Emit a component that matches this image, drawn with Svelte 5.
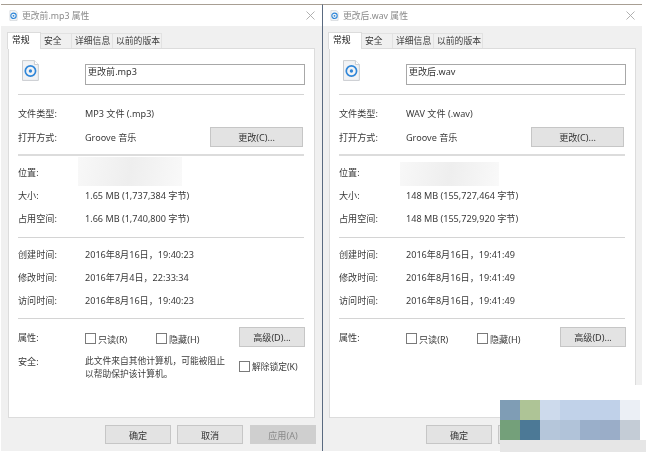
<script>
  const windows = [
    {
      name: '更改前.mp3',
      type: 'MP3 文件 (.mp3)',
      size: '1.65 MB (1,737,384 字节)',
      disk: '1.66 MB (1,740,800 字节)',
      created: '2016年8月16日，19:40:23',
      modified: '2016年7月4日，22:33:34',
      accessed: '2016年8月16日，19:40:23',
      blocked: true
    },
    {
      name: '更改后.wav',
      type: 'WAV 文件 (.wav)',
      size: '148 MB (155,727,464 字节)',
      disk: '148 MB (155,729,920 字节)',
      created: '2016年8月16日，19:41:49',
      modified: '2016年8月16日，19:41:49',
      accessed: '2016年8月16日，19:41:49',
      blocked: false
    }
  ];

  const tabs = ['常规', '安全', '详细信息', '以前的版本'];

  // watermark mosaic, bottom right
  const mosaic = [
    '#7f9db5', '#aec496', '#cddaec', '#c1d2e9', '#c0d1e9', '#c0d1e9', '#ebeff5',
    '#74a07a', '#4c7996', '#b5c6da', '#b1c3d9', '#9aafca', '#9aadc8', '#c4ccd6'
  ];
</script>

<div class="page">
  {#each windows as win, w}
    <section class="window" class:second={w === 1}>
      <header class="title">
        <svg class="title-icon" viewBox="0 0 10 12" width="9" height="11">
          <path d="M1 .5h6l2 2v9H1z" fill="#f4f6f8" stroke="#c4c8cc" stroke-width=".6" />
          <circle cx="5" cy="6.4" r="3" fill="none" stroke="#2f86d8" stroke-width="1.2" />
          <circle cx="5" cy="6.4" r="1" fill="#2f86d8" />
        </svg>
        <span>{win.name} 属性</span>
        <svg class="close" viewBox="0 0 9 9" width="9" height="9">
          <path d="M.5.5l8 8M8.5.5l-8 8" stroke="#a8a8a8" stroke-width=".9" fill="none" />
        </svg>
      </header>

      <nav class="tabs">
        {#each tabs as tab, i}
          <span class="tab tab{i}" class:active={i === 0}>{tab}</span>
        {/each}
      </nav>

      <div class="panel">
        <div class="head">
          <svg viewBox="0 0 17 21" width="17" height="21">
            <path d="M.5.5h12l4 4v16H.5z" fill="#f2f3f5" stroke="#c9ccd0" />
            <path d="M12.5.5v4h4" fill="#fff" stroke="#c9ccd0" />
            <circle cx="8.5" cy="11" r="5.2" fill="none" stroke="#2f86d8" stroke-width="1.7" />
            <circle cx="8.5" cy="11" r="1.7" fill="#2f86d8" />
          </svg>
          <div class="name-input">{win.name}</div>
        </div>

        <hr />

        <div class="row first"><span>文件类型:</span><span>{win.type}</span></div>
        <div class="row open">
          <span>打开方式:</span><span>Groove 音乐</span>
          <button class="change">更改(C)...</button>
        </div>

        <hr class="thick" />

        <div class="group">
          <div class="row"><span>位置:</span><span></span></div>
          <div class="row"><span>大小:</span><span>{win.size}</span></div>
          <div class="row"><span>占用空间:</span><span>{win.disk}</span></div>
        </div>

        <hr />

        <div class="group last">
          <div class="row"><span>创建时间:</span><span>{win.created}</span></div>
          <div class="row"><span>修改时间:</span><span>{win.modified}</span></div>
          <div class="row"><span>访问时间:</span><span>{win.accessed}</span></div>
        </div>

        <hr />

        <div class="row attrs">
          <span>属性:</span>
          <label class="check"><i></i>只读(R)</label>
          <label class="check hidden"><i></i>隐藏(H)</label>
          <button class="advanced">高级(D)...</button>
        </div>

        {#if win.blocked}
          <div class="row security">
            <span>安全:</span>
            <p>此文件来自其他计算机，可能被阻止<br />以帮助保护该计算机。</p>
            <label class="check unlock"><i></i>解除锁定(K)</label>
          </div>
        {/if}

        <div class="smudge" class:alt={w === 1}></div>
      </div>

      <footer class="actions">
        <button>确定</button>
        <button>取消</button>
        <button disabled>应用(A)</button>
      </footer>
    </section>
  {/each}

  <div class="fade"></div>
  <div class="mosaic">
    {#each mosaic as colour}
      <b style="background: {colour}"></b>
    {/each}
  </div>
</div>

<style>
  :global(body) {
    margin: 0;
    background: #fff;
  }

  .page {
    position: relative;
    width: 646px;
    height: 452px;
    overflow: hidden;
    display: flex;
    padding-top: 4px;
    padding-left: 1px;
    box-sizing: border-box;
    background: #fff;
    font-family: "Noto Sans", "Noto Sans CJK SC", sans-serif;
    font-size: 9.1px;
    color: #3a3a3a;
    filter: blur(0.35px);
  }

  .window {
    width: 321px;
    height: 447px;
    flex: none;
    display: flex;
    flex-direction: column;
    background: #f0f0f0;
    border-top: 1px solid #a89f94;
    box-sizing: border-box;
  }

  .window.second {
    width: 320px;
    border-left: 1px solid #5a6a80;
  }

  .title {
    height: 21px;
    flex: none;
    display: flex;
    align-items: center;
    gap: 4px;
    padding: 0 7px 0 8px;
    background: #fff;
    color: #8a8a8a;
    font-size: 8.8px;
  }

  .second .title {
    padding-left: 7px;
  }

  .close {
    margin-left: auto;
  }

  .tabs {
    display: flex;
    align-items: flex-end;
    height: 22px;
    flex: none;
    padding-left: 6px;
  }

  .second .tabs {
    padding-left: 5px;
  }

  .tab {
    height: 15px;
    line-height: 14px;
    padding-left: 3px;
    box-sizing: border-box;
    white-space: nowrap;
    font-size: 8.8px;
    background: #f0f0f0;
    border: 1px solid #e2e2e2;
    border-bottom: none;
    border-left: none;
  }

  .tab0 { width: 34px; }
  .tab1 { width: 31px; }
  .tab2 { width: 41px; }
  .tab3 { width: 49px; }

  .tab.active {
    height: 17px;
    line-height: 14px;
    padding-left: 4px;
    background: #fff;
    color: #222;
    border: 1px solid #dcdcdc;
    border-bottom: none;
    margin-bottom: -1px;
    position: relative;
    z-index: 1;
  }

  .panel {
    position: relative;
    width: 307px;
    height: 370px;
    flex: none;
    margin-left: 7px;
    padding: 0 9px;
    box-sizing: border-box;
    background: #fff;
    border: 1px solid #dcdcdc;
  }

  .second .panel {
    margin-left: 6px;
  }

  .head {
    display: flex;
    align-items: flex-start;
    height: 45px;
    padding-top: 11px;
    box-sizing: border-box;
  }

  .head svg {
    margin-left: 4px;
  }

  .name-input {
    width: 222px;
    height: 21px;
    margin-left: 46px;
    margin-top: 4px;
    padding: 0 2px;
    box-sizing: border-box;
    border: 1px solid #a8a8a8;
    line-height: 14px;
    color: #333;
  }

  hr {
    margin: 0;
    border: none;
    border-top: 1px solid #d4d4d4;
    width: 286px;
  }

  hr.thick {
    border-top-width: 2px;
    border-top-color: #dcdcdc;
  }

  .row {
    display: grid;
    grid-template-columns: 67px 1fr;
    align-items: center;
    height: 23px;
  }

  .row.first {
    margin-top: 5px;
    height: 25px;
  }

  .row.open {
    grid-template-columns: 67px 125px 93px;
    height: 24px;
    margin-bottom: 5px;
  }

  .group {
    padding: 4px 0 8px;
  }

  .group.last {
    padding-bottom: 7px;
  }

  button {
    height: 20px;
    padding: 0;
    font: inherit;
    color: #333;
    background: #e3e3e3;
    border: 1px solid #c6c6c6;
    box-sizing: border-box;
  }

  button:disabled {
    background: #cfcfcf;
    border-color: #cfcfcf;
    color: #8a8a8a;
  }

  .row.attrs {
    grid-template-columns: 67px 71px 83px 66px;
    height: 22px;
    margin-top: 7px;
  }

  .row.attrs > span {
    margin-top: -1px;
  }

  .check {
    display: flex;
    align-items: center;
    gap: 2px;
    white-space: nowrap;
    margin-top: 3px;
  }

  .check i {
    width: 9px;
    height: 9px;
    border: 1px solid #7a7a7a;
    flex: none;
    background: #fff;
  }

  .row.security {
    grid-template-columns: 67px 154px auto;
    align-items: start;
    height: 40px;
    margin-top: 6px;
  }

  .row.security p {
    margin: 0;
    line-height: 13px;
    padding-top: 1px;
    font-size: 8.75px;
  }

  .unlock {
    margin-top: 6px;
    font-size: 8.75px;
  }

  .smudge {
    position: absolute;
    left: 69px;
    top: 108px;
    width: 104px;
    height: 29px;
    background: linear-gradient(100deg, #f8f8f8, #eeeeee 50%, #f9f9f9);
  }

  .smudge.alt {
    left: 70px;
    top: 113px;
    width: 99px;
    height: 24px;
  }

  .actions {
    display: flex;
    gap: 6px;
    padding: 7px 0 0 104px;
  }

  .second .actions {
    padding-left: 103px;
  }

  .actions button {
    width: 66px;
    height: 19px;
  }

  .actions button:last-child {
    margin-left: 1px;
  }

  .fade {
    position: absolute;
    left: 500px;
    top: 385px;
    width: 146px;
    height: 67px;
    background: linear-gradient(#fff 0 55px, #e6e6e6 55px);
  }

  .mosaic {
    position: absolute;
    left: 500px;
    top: 400px;
    width: 140px;
    display: grid;
    grid-template-columns: repeat(7, 20px);
    grid-auto-rows: 20px;
  }
</style>
